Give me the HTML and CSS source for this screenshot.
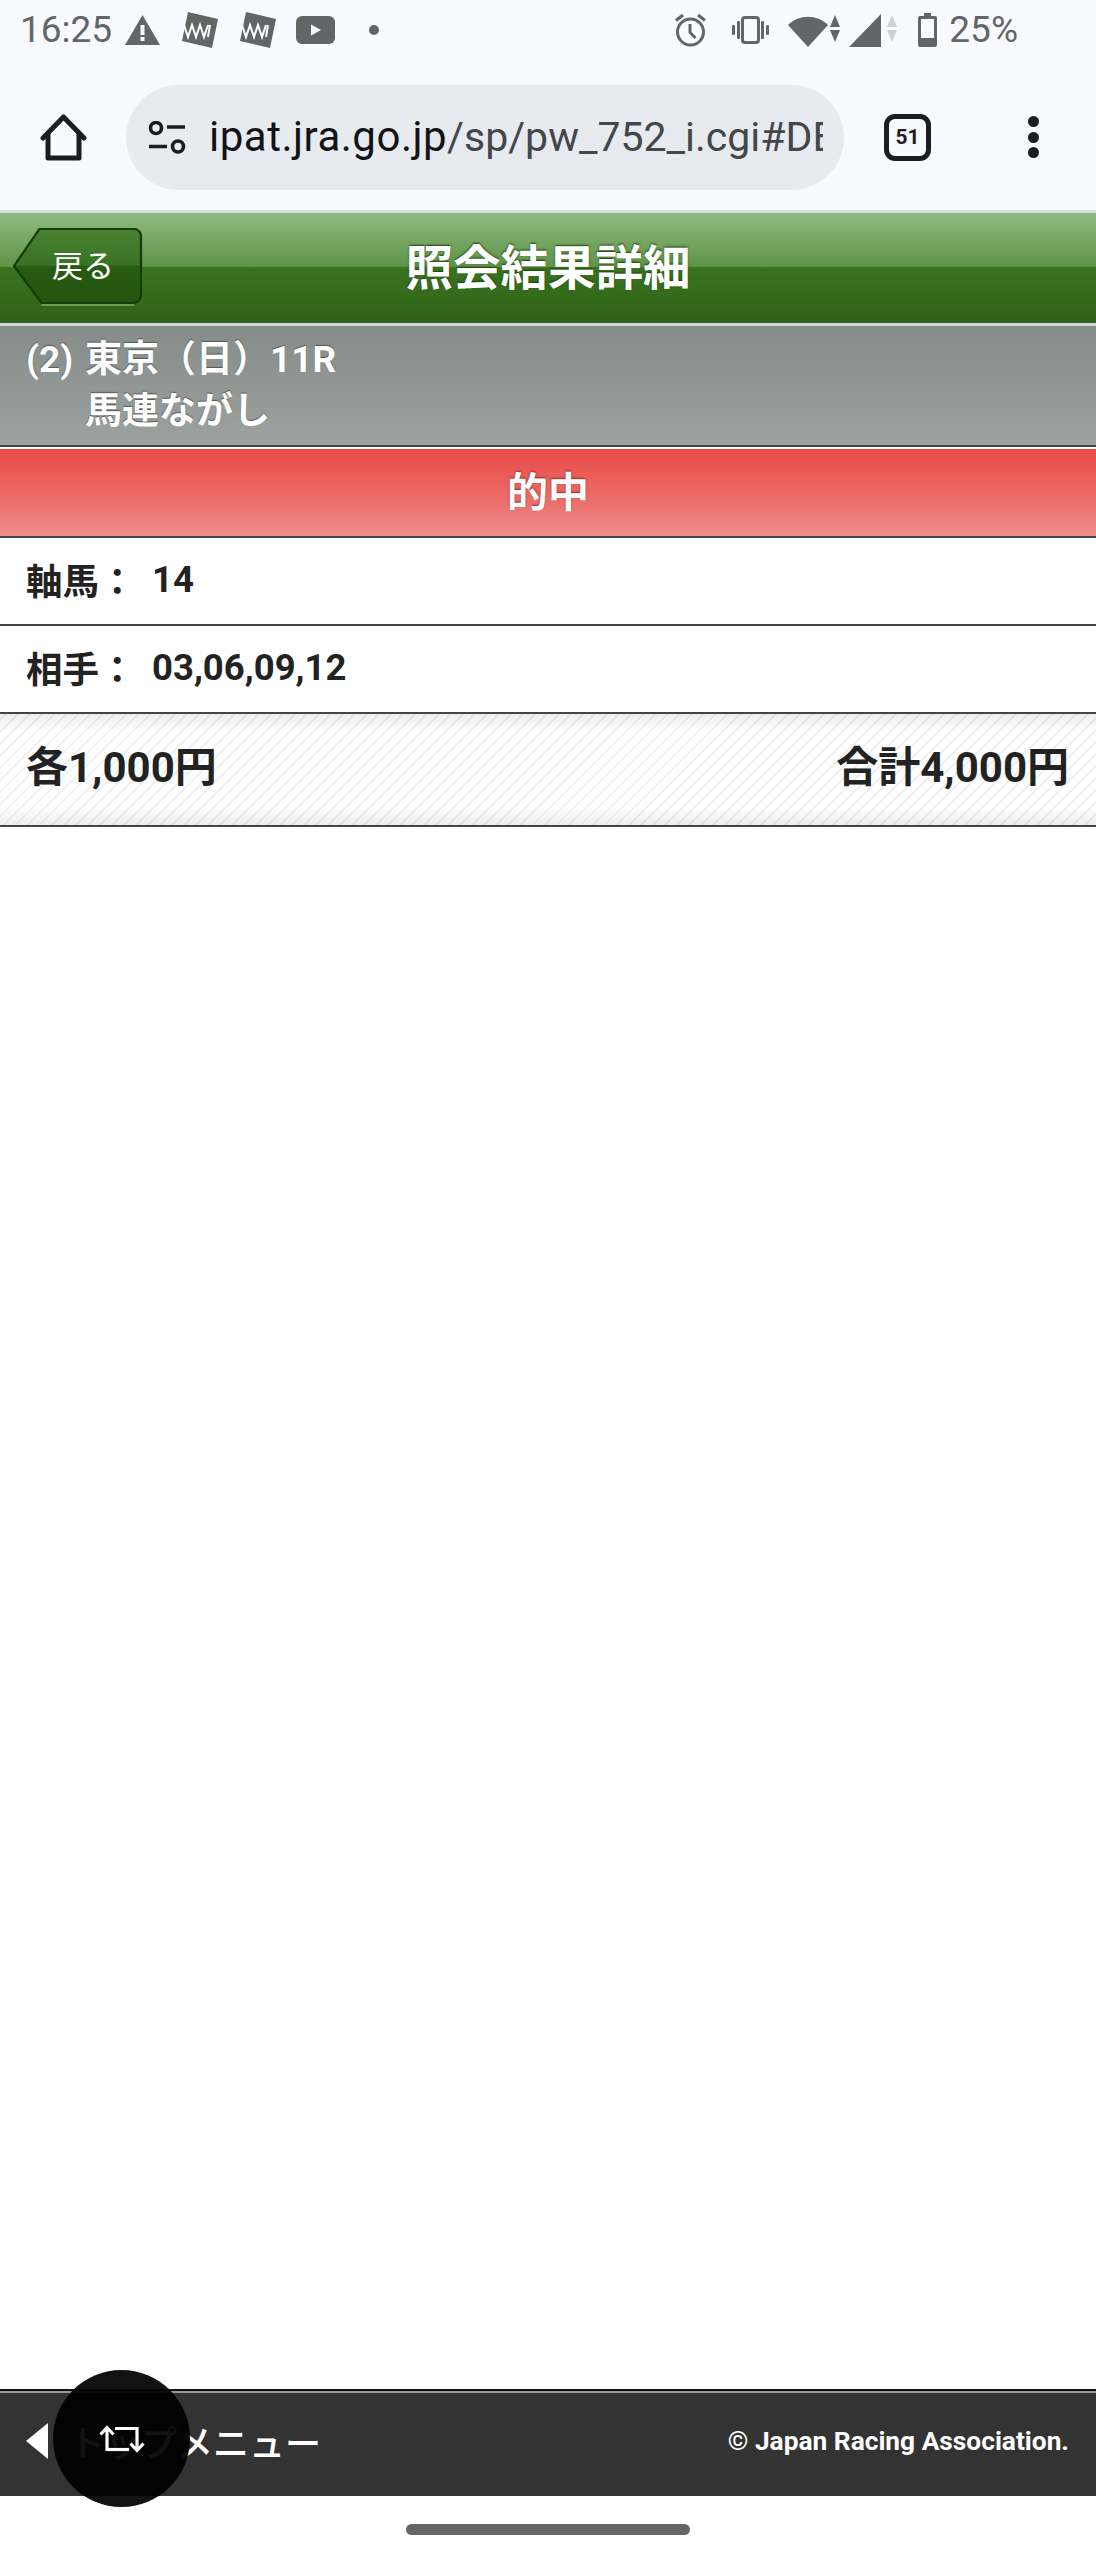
FILE: index.html
```html
<!DOCTYPE html>
<html lang="ja">
<head>
<meta charset="utf-8">
<title>照会結果詳細</title>
<link rel="stylesheet" href="styles.css">
</head>
<body>
<div class="page">
  <div class="browser">
    <div class="status">
      <span class="status-time">16:25</span>
      <svg class="ic ic-warn" viewBox="0 0 35 30"><path d="M17.5 0 35 30H0z" fill="#636567"/><rect x="15.5" y="10" width="4" height="10" fill="#f8faff"/><rect x="15.5" y="22" width="4" height="4" fill="#f8faff"/></svg>
      <svg class="ic ic-wn" viewBox="0 0 36 36"><path d="M6 0 36 7 30 36 0 29z" fill="#636567"/><path d="M2 13 6 25 10 13 14 25 18 13 22 25 26 13M28 13 26 25" fill="none" stroke="#fff" stroke-width="2"/></svg>
      <svg class="ic ic-wn ic-wn2" viewBox="0 0 36 36"><path d="M6 0 36 7 30 36 0 29z" fill="#636567"/><path d="M2 13 6 25 10 13 14 25 18 13 22 25 26 13M28 13 26 25" fill="none" stroke="#fff" stroke-width="2"/></svg>
      <svg class="ic ic-yt" viewBox="0 0 39 28"><rect width="39" height="28" rx="6" fill="#636567"/><path d="M15 8.500 25 14 15 19.500z" fill="#f8faff"/></svg>
      <span class="status-dot"></span>
      <span class="status-space"></span>
      <svg class="ic ic-alarm" viewBox="0 0 33 34" fill="none" stroke="#636567"><circle cx="16.500" cy="19" r="13" stroke-width="3"/><path d="M16 11v8.500l5.500 5.500M2 7.500 9 2M31 7.500 24 2" stroke-width="3"/></svg>
      <svg class="ic ic-vib" viewBox="0 0 37 28" fill="#636567"><rect x="10.500" y="1.500" width="16" height="25" rx="2.500" fill="none" stroke="#636567" stroke-width="3"/><rect y="9" width="3" height="10" rx="1"/><rect x="5" y="5" width="3" height="18" rx="1"/><rect x="29" y="5" width="3" height="18" rx="1"/><rect x="34" y="9" width="3" height="10" rx="1"/></svg>
      <svg class="ic ic-wifi" viewBox="0 0 52 33" fill="#636567"><path d="M0 11C11 0 29 0 40 11L20 33z"/><path d="M47 1 52 13H42zM42 16H52L47 28z"/></svg>
      <svg class="ic ic-sig" viewBox="0 0 48 33"><path d="M32 0V33H0z" fill="#636567"/><path d="M43 1 48 13H38zM38 16H48L43 28z" fill="#cfd2d4"/></svg>
      <svg class="ic ic-bat" viewBox="0 0 19 34"><path d="M6 0h7v3h4a2 2 0 0 1 2 2v27a2 2 0 0 1-2 2H2a2 2 0 0 1-2-2V5a2 2 0 0 1 2-2h4z" fill="#636567"/><rect x="3" y="6" width="13" height="19" fill="#f8faff"/></svg>
      <span class="status-batt">25%</span>
    </div>
    <div class="toolbar">
      <svg class="ic-home" viewBox="0 0 47 47" fill="none" stroke="#1b1d20" stroke-width="5" stroke-linejoin="round" stroke-linecap="round"><path d="M3 24 23.500 3 44 24"/><path d="M8 20V44H39V20"/></svg>
      <div class="urlbar">
        <svg class="ic-tune" viewBox="0 0 39 33" fill="none" stroke="#1b1d20" stroke-width="3.600"><circle cx="8" cy="7" r="5.500"/><path d="M19 6H37M1 25.500H19"/><circle cx="30" cy="25.500" r="5.500"/></svg>
        <div class="urltext"><span class="url-host">ipat.jra.go.jp</span>/sp/pw_752_i.cgi#DE</div>
      </div>
      <div class="tabs">51</div>
      <div class="menu"><span></span><span></span><span></span></div>
    </div>
    <div class="browser-line"></div>
  </div>

  <header class="head">
    <a class="back">
      <svg class="back-shape" viewBox="0 0 128 78" preserveAspectRatio="none">
        <defs><linearGradient id="backfill" x1="0" y1="0" x2="0" y2="1"><stop offset="0" stop-color="#4a8233"/><stop offset=".49" stop-color="#3a7226"/><stop offset=".5" stop-color="#285c12"/><stop offset="1" stop-color="#26540f"/></linearGradient></defs>
        <path d="M26 1H119a7 7 0 0 1 7 7V67a8 8 0 0 1-8 8H28L1 38z" fill="url(#backfill)" stroke="#143c08" stroke-width="2.200"/>
        <path d="M28 77H119" stroke="#7fae6c" stroke-width="1.500"/>
      </svg>
      <span class="back-label">戻る</span>
    </a>
    <h1 class="head-title">照会結果詳細</h1>
  </header>

  <section class="info">
    <div class="info-num">(2)</div>
    <div class="info-body">
      <div>東京（日）11R</div>
      <div>馬連ながし</div>
    </div>
  </section>

  <div class="result">的中</div>

  <div class="row"><span class="row-label">軸馬：</span><span class="row-val">14</span></div>
  <div class="row"><span class="row-label">相手：</span><span class="row-val">03,06,09,12</span></div>
  <div class="total"><span>各1,000円</span><span>合計4,000円</span></div>

  <main class="blank"></main>

  <footer class="foot">
    <a class="foot-link"><span class="foot-arrow"></span>トップメニュー</a>
    <span class="foot-copy">© Japan Racing Association.</span>
  </footer>
  <div class="gesture"><span class="gesture-bar"></span></div>

  <div class="float">
    <svg class="float-icon" viewBox="0 0 46 28" fill="none" stroke="#fff" stroke-width="3.200"><path d="M8 26V3.500M1.500 9.500 8 2.500 14.500 9.500"/><path d="M8 24.500H30"/><path d="M16 3.500H38V25M31.500 18.500 38 25.500 44.500 18.500"/></svg>
  </div>
</div>
</body>
</html>
```

FILE: styles.css
```css
* { box-sizing: border-box; }
html, body { margin: 0; padding: 0; background: #fff; }
body { font-family: Roboto, "Noto Sans CJK JP", sans-serif; }
.page { position: relative; display: flex; flex-direction: column; width: 1096px; height: 2560px; overflow: hidden; }

.browser { background: #f8faff; flex: none; }
.status { display: flex; align-items: center; height: 64px; padding: 0 0 4px 20px; color: #636567; }
.status-time { font-size: 37px; line-height: 36px; width: 105px; }
.status-batt { font-size: 37px; line-height: 36px; margin-left: 12px; margin-right: 78px; }
.ic { display: block; flex: none; }
.ic-warn { width: 35px; height: 30px; }
.ic-wn { width: 36px; height: 36px; margin-left: 22px; }
.ic-wn2 { margin-left: 22px; }
.ic-yt { width: 39px; height: 28px; margin-left: 20px; }
.status-dot { width: 10px; height: 10px; border-radius: 50%; background: #636567; margin-left: 34px; }
.status-space { flex: 1; }
.ic-alarm { width: 33px; height: 34px; }
.ic-vib { width: 37px; height: 28px; margin-left: 25px; }
.ic-wifi { width: 52px; height: 33px; margin-left: 19px; }
.ic-sig { width: 48px; height: 33px; margin-left: 9px; }
.ic-bat { width: 19px; height: 34px; margin-left: 21px; }

.toolbar { display: flex; align-items: center; height: 146px; }
.ic-home { width: 47px; height: 47px; margin-left: 40px; flex: none; }
.urlbar { display: flex; align-items: center; width: 718px; height: 105px; margin-left: 39px; padding: 0 21px 0 22px; border-radius: 53px; background: #e7eaee; }
.ic-tune { width: 39px; height: 33px; flex: none; }
.urltext { margin-left: 22px; flex: 1; min-width: 0; overflow: hidden; white-space: nowrap; font-family: Roboto, sans-serif; font-size: 41px; line-height: 52px; font-weight: 400; color: #43474c; }
.url-host { font-size: 42px; color: #111316; letter-spacing: .5px; }
.tabs { display: flex; align-items: center; justify-content: center; flex: none; width: 47px; height: 47px; margin-left: 40px; border: 5px solid #1b1d20; border-radius: 11px; font-size: 21px; font-weight: 700; color: #1b1d20; }
.menu { display: flex; flex-direction: column; gap: 4.500px; flex: none; margin-left: 97px; }
.menu span { display: block; width: 11px; height: 11px; border-radius: 50%; background: #1b1d20; }
.browser-line { height: 3px; background: #d9dee1; }

.head { position: relative; display: flex; align-items: center; justify-content: center; flex: none; height: 110px; padding-bottom: 6px; background: linear-gradient(#8fbb80 0, #5f9347 49%, #39741f 49.5%, #2f6218 100%); }
.head-title { margin: 0; font-family: "Noto Sans CJK JP", sans-serif; font-size: 47.500px; line-height: 60px; font-weight: 700; color: #fff; text-shadow: 0 -1px 2px #1b3f0c; }
.back { position: absolute; left: 13px; top: 15px; width: 130px; height: 78px; display: flex; align-items: center; justify-content: center; padding-bottom: 6px; }
.back-shape { position: absolute; inset: 0; width: 100%; height: 100%; }
.back-label { position: relative; margin-left: 10px; font-family: "Noto Sans CJK JP", sans-serif; font-size: 31px; line-height: 40px; color: #fff; }

.info { display: flex; flex: none; height: 124px; padding: 8px 0 0 26px; border-top: 3px solid #d2d6d4; border-bottom: 2px solid #444; background: linear-gradient(#868c89, #9ca29f); color: #fff; font-weight: 700; font-size: 37px; line-height: 52px; text-shadow: 0 -1px 1px #555; font-family: Roboto, "Noto Sans CJK JP", sans-serif; }
.info-num { width: 59px; }
.result { flex: none; height: 89px; margin-top: 2px; border-bottom: 2px solid #444; background: linear-gradient(#ea4a45, #ec6e6b 60%, #ee8f8c); color: #fff; text-align: center; font-family: "Noto Sans CJK JP", sans-serif; font-size: 41px; font-weight: 700; line-height: 80px; text-shadow: 0 -1px 2px #8a2a28; }

.row { display: flex; align-items: center; flex: none; height: 88px; padding: 0 26px 4px; border-bottom: 2px solid #444; color: #222; font-size: 36.500px; font-weight: 700; }
.row-label { width: 126px; font-family: "Noto Sans CJK JP", sans-serif; white-space: nowrap; }
.row-val { font-family: Roboto, sans-serif; }

.total { display: flex; align-items: center; justify-content: space-between; flex: none; height: 113px; padding: 0 27px 12px 26px; border-bottom: 2px solid #444; color: #222; font-size: 42px; font-weight: 700; background: linear-gradient(rgba(0,0,0,.07), rgba(0,0,0,0) 16%, rgba(0,0,0,0) 84%, rgba(0,0,0,.07)), repeating-linear-gradient(-45deg, #fff 0, #fff 6.500px, #f0f0f0 6.500px, #f0f0f0 8.500px); }

.blank { flex: 1; }

.foot { display: flex; align-items: center; justify-content: space-between; flex: none; height: 107px; padding: 0 27px 5px 26px; border-top: 2px solid #111; background: #333; box-shadow: inset 0 2px 0 #999; color: #fff; font-weight: 700; }
.foot-link { display: flex; align-items: center; font-family: "Noto Sans CJK JP", sans-serif; font-size: 36px; line-height: 46px; font-weight: 500; }
.foot-arrow { width: 0; height: 0; margin-right: 21px; border-style: solid; border-width: 18px 22px 18px 0; border-color: transparent #fff transparent transparent; }
.foot-copy { font-size: 26.300px; line-height: 36px; font-family: Roboto, sans-serif; }

.gesture { display: flex; justify-content: center; flex: none; height: 64px; padding-top: 28px; }
.gesture-bar { width: 284px; height: 11px; border-radius: 6px; background: #666; }

.float { position: absolute; left: 53px; top: 2370px; display: flex; align-items: center; justify-content: center; width: 137px; height: 137px; padding-bottom: 0; border-radius: 50%; background: rgba(0,0,0,.93); }
.float-icon { width: 46px; height: 28px; }
```
